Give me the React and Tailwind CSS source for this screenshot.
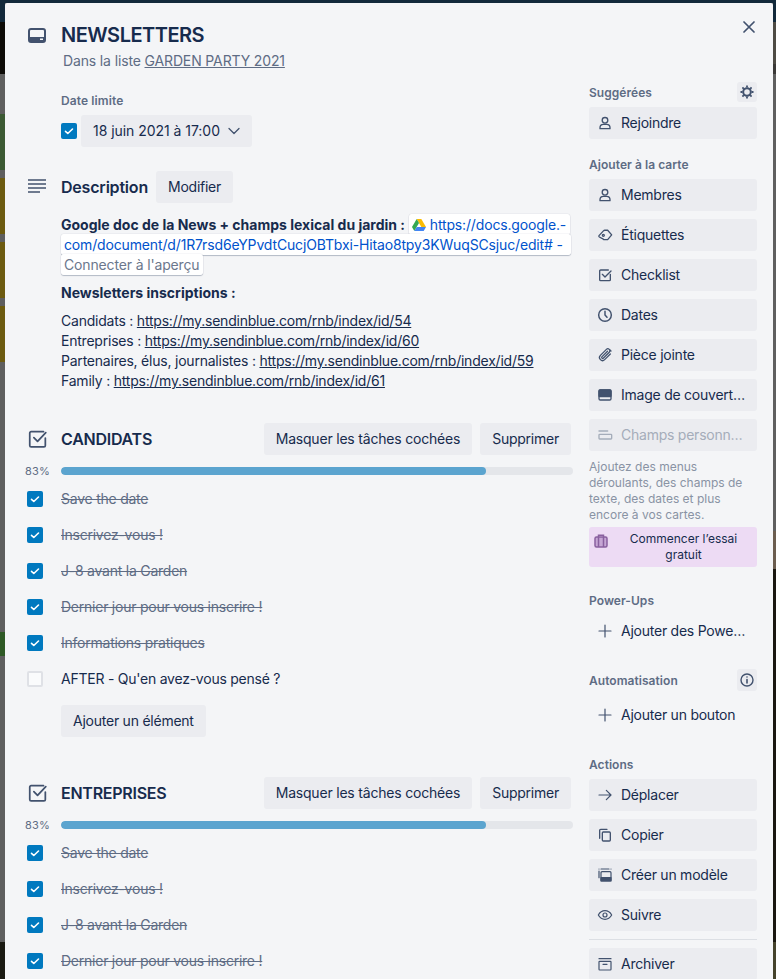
import React from 'react';

const ink = '#42526e';

function Svg({ size = 16, className = '', children, fill = 'none', stroke = ink, sw = 2 }) {
  return (
    <svg width={size} height={size} viewBox="0 0 24 24" fill={fill} stroke={stroke} strokeWidth={sw} strokeLinecap="round" strokeLinejoin="round" className={className}>
      {children}
    </svg>
  );
}

const icons = {
  user: (
    <Svg>
      <circle cx="12" cy="8" r="4.2" />
      <path d="M4.5 20.5v-1.5a5 5 0 0 1 5-5h5a5 5 0 0 1 5 5v1.500z" />
    </Svg>
  ),
  tag: (
    <Svg>
      <path d="M3 13 L10 5.500 a2 2 0 0 1 1.500-.6 H16 l6 7 -6 7 h-5 a2 2 0 0 1-1.500-.6 L3.500 15 a1.500 1.500 0 0 1-.5-2z" />
      <circle cx="9.500" cy="12.500" r="1.500" />
    </Svg>
  ),
  check: (
    <Svg>
      <path d="M20 11v8a1.500 1.500 0 0 1-1.500 1.500h-13A1.500 1.500 0 0 1 4 19V6a1.500 1.500 0 0 1 1.500-1.500H17" />
      <path d="M8 11l4 4 9-9" />
    </Svg>
  ),
  clock: (
    <Svg sw={2.2}>
      <circle cx="12" cy="12" r="9.500" />
      <path d="M12 6.500V12l3 3.500" />
    </Svg>
  ),
  clip: (
    <Svg sw={1.900}>
      <path d="M20 10.500l-8.500 8.500a4.500 4.500 0 0 1-6.400-6.400l9-9a3 3 0 0 1 4.300 4.300l-9 9a1.500 1.500 0 0 1-2.100-2.100l8.500-8.500" />
      <path d="M21 6l-2-2" />
    </Svg>
  ),
  cover: (
    <Svg fill="none">
      <rect x="3" y="4.500" width="18" height="15" rx="2" />
      <rect x="3" y="4.500" width="18" height="10" rx="1.500" fill={ink} />
    </Svg>
  ),
  fields: (
    <Svg stroke="#a5adba">
      <path d="M3 6h13" />
      <rect x="3" y="11" width="19" height="7" rx="1" />
    </Svg>
  ),
  plus: (
    <Svg size={16} sw={1.800}>
      <path d="M12 3v18M3 12h18" />
    </Svg>
  ),
  arrow: (
    <Svg sw={1.800}>
      <path d="M3 12h18M14 5l7 7-7 7" />
    </Svg>
  ),
  copy: (
    <Svg>
      <path d="M4 17V5a1.500 1.500 0 0 1 1.500-1.500H15" fill="none" />
      <rect x="8" y="7.500" width="12" height="13.500" rx="1.500" />
    </Svg>
  ),
  template: (
    <Svg sw={1.800}>
      <path d="M3 16V6M6 3h12M3 3v.01M21 3v.01" />
      <rect x="6" y="7" width="15" height="14" rx="1.500" />
      <rect x="6" y="16" width="15" height="5" fill={ink} />
    </Svg>
  ),
  eye: (
    <Svg sw={1.800}>
      <path d="M2 12c2.500-4.500 6-6.500 10-6.500s7.500 2 10 6.500c-2.500 4.500-6 6.500-10 6.500S4.500 16.500 2 12z" />
      <circle cx="12" cy="12" r="3" />
    </Svg>
  ),
  archive: (
    <Svg sw={1.800}>
      <path d="M3 4h18" />
      <rect x="3" y="8" width="18" height="13" rx="1" />
      <path d="M9 12.500h6" />
    </Svg>
  ),
};

function Tick() {
  return (
    <svg width="16" height="16" viewBox="0 0 16 16" fill="none" stroke="#fff" strokeWidth="1.600" strokeLinecap="round" strokeLinejoin="round">
      <path d="M4.500 8.300l2.300 2.200 4.700-4.500" />
    </svg>
  );
}

function CheckBox({ done = true }) {
  if (!done) {
    return <div className="h-4 w-4 rounded-[2px] border-2 border-[#dfe1e6] bg-[#fafbfc]"></div>;
  }
  return (
    <div className="h-4 w-4 rounded-[2px] bg-[#0079bf]">
      <Tick />
    </div>
  );
}

function Btn({ children, className = '' }) {
  return (
    <div className={`flex h-8 items-center rounded-[3px] bg-[#ebecf0] px-3 text-sm text-[#172b4d] ${className}`}>
      {children}
    </div>
  );
}

function SideBtn({ icon, children, plain, disabled }) {
  return (
    <div className={`flex h-8 items-center gap-2 rounded-[3px] pl-2 text-sm ${plain ? '' : 'bg-[#ebecf0]'} ${disabled ? 'text-[#a5adba]' : 'text-[#172b4d]'}`}>
      <span className="flex w-4 shrink-0 items-center justify-center">{icons[icon]}</span>
      <span className="whitespace-nowrap">{children}</span>
    </div>
  );
}

function SideLabel({ children, right }) {
  return (
    <div className="flex min-h-[20px] items-center justify-between text-xs font-semibold tracking-[0.05px] text-[#5e6c84]">
      <span className="pt-[2px]">{children}</span>
      {right}
    </div>
  );
}

function SideStack({ children, className = 'mt-[5px]' }) {
  return <div className={`flex flex-col gap-2 ${className}`}>{children}</div>;
}

function ChecklistBlock({ title, items, addButton }) {
  return (
    <div>
      <div className="flex h-8 items-center">
        <div className="flex w-[56px] shrink-0 justify-center pl-[9px]">
          <Svg size={22} sw={1.900}>
            <path d="M20 11v8a1.500 1.500 0 0 1-1.500 1.500h-14A1.500 1.500 0 0 1 3 19V5.500A1.500 1.500 0 0 1 4.500 4H18" />
            <path d="M7.500 10.500l4 4L20.500 5" />
          </Svg>
        </div>
        <h3 className="flex-1 text-base font-semibold tracking-[-0.25px] text-[#172b4d]">{title}</h3>
        <Btn className="tracking-[-0.2px]">Masquer les tâches cochées</Btn>
        <Btn className="ml-2 mr-[2px]">Supprimer</Btn>
      </div>
      <div className="mt-2 flex h-4 items-center">
        <div className="w-[56px] shrink-0 pl-[20px] text-[11px] leading-none tracking-[0.2px] text-[#5e6c84]">83%</div>
        <div className="h-2 flex-1 overflow-hidden rounded-[4px] bg-[#e4e6ea]">
          <div className="h-2 w-[83%] rounded-[4px] bg-[#5ba4cf]"></div>
        </div>
      </div>
      <div className="mt-[2px]">
        {items.map((item) => (
          <div key={item.text} className="flex h-9 items-center">
            <div className="flex w-[56px] shrink-0 pl-[22px]">
              <CheckBox done={item.done} />
            </div>
            <span className={`text-sm ${item.done ? 'text-[#5e6c84] line-through' : 'text-[#172b4d]'}`}>{item.text}</span>
          </div>
        ))}
      </div>
      {addButton && (
        <div className="ml-[56px] mt-2 flex">
          <Btn>Ajouter un élément</Btn>
        </div>
      )}
    </div>
  );
}

function Strip({ blocks, className = '' }) {
  return (
    <div className={`flex h-[979px] shrink-0 flex-col ${className}`}>
      {blocks.map(([h, color], i) => (
        <div key={i} style={{ height: h, background: color }}></div>
      ))}
    </div>
  );
}

const leftBlocks = [
  [22, '#12293b'], [52, '#0d0b07'], [40, '#5f5f5f'], [56, '#3c5a34'], [8, '#5f5f5f'], [56, '#6d5b10'], [8, '#5f5f5f'],
  [56, '#6d5b10'], [8, '#5f5f5f'], [56, '#6d5b10'], [270, '#5f5f5f'], [24, '#2f5a26'], [286, '#5f5f5f'], [37, '#1a1a12'],
];

const rightBlocks = [
  [22, '#12293b'], [42, '#4e4b44'], [10, '#3b3937'], [457, '#5f5f5f'], [38, '#6b5d4f'], [373, '#1a1710'], [37, '#45432c'],
];

const candidats = [
  { text: 'Save the date', done: true },
  { text: 'Inscrivez-vous !', done: true },
  { text: 'J-8 avant la Garden', done: true },
  { text: 'Dernier jour pour vous inscrire !', done: true },
  { text: 'Informations pratiques', done: true },
  { text: "AFTER - Qu'en avez-vous pensé ?", done: false },
];

const entreprises = candidats.slice(0, 4);

export default function App() {
  return (
    <div className="flex h-[979px] w-[776px] overflow-hidden bg-[#5f5f5f] font-['Inter',sans-serif] tracking-[-0.24px]">
      <Strip blocks={leftBlocks} className="w-[5px]" />

      <div className="flex w-[768px] shrink-0 flex-col">
        <div className="h-[3px] shrink-0 bg-[#12293b]"></div>
        <div className="relative flex flex-1 overflow-hidden rounded-t-[2px] bg-[#f4f5f7]">
          {/* close button */}
          <svg className="absolute right-[18px] top-[18px]" width="12" height="12" viewBox="0 0 12 12" fill="none" stroke={ink} strokeWidth="1.700" strokeLinecap="round">
            <path d="M1 1l10 10M11 1L1 11" />
          </svg>

          {/* main column */}
          <div className="w-[568px] shrink-0 pt-5">
            <div className="flex h-6 items-center">
              <div className="flex w-[56px] shrink-0 justify-center pl-[8px]">
                <svg width="18" height="15" viewBox="0 0 18 15">
                  <rect x="1" y="1" width="16" height="13" rx="2" fill="none" stroke={ink} strokeWidth="2" />
                  <rect x="1" y="9" width="16" height="5" rx="1" fill={ink} />
                  <rect x="12" y="10.500" width="3" height="1.500" fill="#f4f5f7" />
                </svg>
              </div>
              <h2 className="text-[20px] font-semibold leading-6 tracking-[-0.5px] text-[#172b4d]">NEWSLETTERS</h2>
            </div>
            <p className="ml-[58px] mt-1 text-sm leading-5 tracking-[-0.14px] text-[#5e6c84]">
              Dans la liste <span className="underline">GARDEN PARTY 2021</span>
            </p>

            <div className="ml-[56px] mt-[22px] text-xs font-semibold leading-4 tracking-[0.1px] text-[#5e6c84]">Date limite</div>
            <div className="ml-[56px] mt-[6px] flex items-center gap-1">
              <CheckBox />
              <Btn className="gap-2 tracking-[-0.04px]">
                18 juin 2021 à 17:00
                <svg width="12" height="12" viewBox="0 0 12 12" fill="none" stroke={ink} strokeWidth="1.300" strokeLinecap="round" strokeLinejoin="round">
                  <path d="M1 3.500l5 5 5-5" />
                </svg>
              </Btn>
            </div>

            <div className="mt-6 flex h-8 items-center">
              <div className="flex w-[56px] shrink-0 justify-center pl-[8px]">
                <svg width="18" height="16" viewBox="0 0 18 16" stroke={ink} strokeWidth="1.500">
                  <path d="M0 1h18M0 5h18M0 9h18M0 13h12" />
                </svg>
              </div>
              <h3 className="text-base font-semibold tracking-[-0.2px] text-[#172b4d]">Description</h3>
              <Btn className="ml-2">Modifier</Btn>
            </div>

            <div className="ml-[56px] mt-3 text-sm leading-5 text-[#172b4d]">
              <p>
                <strong className="font-bold tracking-normal">Google doc de la News + champs lexical du jardin :</strong>{' '}
                <span className="rounded-[3px] bg-white py-[2px] pl-[3px] pr-[4px] tracking-[-0.15px] text-[#0052cc] shadow-[0_1px_1px_rgba(9,30,66,0.25),0_0_1px_rgba(9,30,66,0.31)] [box-decoration-break:clone]">
                  <svg className="mr-[4px] inline align-[-1px]" width="14" height="12" viewBox="0 0 14 12">
                    <path d="M4.700 0h4.600l4.700 8H9.300z" fill="#fbbc04" />
                    <path d="M4.700 0L0 8l2.300 4 4.700-8z" fill="#34a853" />
                    <path d="M4.700 8H14l-2.300 4H2.300z" fill="#4285f4" />
                  </svg>
                  https://docs.google.-
                  <br />
                  com/document/d/1R7rsd6eYPvdtCucjOBTbxi-Hitao8tpy3KWuqSCsjuc/edit# -<span className="pr-[4px]"></span>
                  <br />
                  <span className="text-[#6b778c]">Connecter à l'aperçu</span>
                </span>
              </p>
              <p className="mt-2 font-bold tracking-normal">Newsletters inscriptions :</p>
              <p className="mt-2 tracking-[-0.22px]">
                Candidats : <span className="underline">https://my.sendinblue.com/rnb/index/id/54</span>
                <br />
                Entreprises : <span className="underline">https://my.sendinblue.com/rnb/index/id/60</span>
                <br />
                Partenaires, élus, journalistes : <span className="underline">https://my.sendinblue.com/rnb/index/id/59</span>
                <br />
                Family : <span className="underline">https://my.sendinblue.com/rnb/index/id/61</span>
              </p>
            </div>

            <div className="mt-8">
              <ChecklistBlock title="CANDIDATS" items={candidats} addButton />
            </div>
            <div className="mt-10">
              <ChecklistBlock title="ENTREPRISES" items={entreprises} />
            </div>
          </div>

          {/* sidebar */}
          <div className="ml-4 w-[168px] shrink-0 pt-[79px]">
            <SideLabel
              right={
                <span className="flex h-5 w-5 items-center justify-center rounded-[3px] bg-[#ebecf0]">
                  <svg width="14" height="14" viewBox="0 0 14 14" fill="none" stroke={ink} strokeWidth="2">
                    <circle cx="7" cy="7" r="3.800" />
                    <path d="M7 .5v2M7 11.500v2M.5 7h2M11.500 7h2M2.400 2.400l1.400 1.400M10.200 10.200l1.400 1.400M2.400 11.600l1.400-1.400M10.200 3.800l1.400-1.400" strokeWidth="1.800" />
                  </svg>
                </span>
              }
            >
              Suggérées
            </SideLabel>
            <SideStack>
              <SideBtn icon="user">Rejoindre</SideBtn>
            </SideStack>

            <div className="mt-[15px]">
              <SideLabel>Ajouter à la carte</SideLabel>
            </div>
            <SideStack>
              <SideBtn icon="user">Membres</SideBtn>
              <SideBtn icon="tag">Étiquettes</SideBtn>
              <SideBtn icon="check">Checklist</SideBtn>
              <SideBtn icon="clock">Dates</SideBtn>
              <SideBtn icon="clip">Pièce jointe</SideBtn>
              <SideBtn icon="cover">Image de couvert…</SideBtn>
              <SideBtn icon="fields" disabled>Champs personn…</SideBtn>
            </SideStack>
            <p className="mt-2 text-xs leading-4 tracking-normal text-[#8993a4]">
              Ajoutez des menus déroulants, des champs de texte, des dates et plus encore à vos cartes.
            </p>
            <div className="mt-1 flex h-10 items-center rounded-[3px] bg-[#eddbf4] pl-[5px] text-xs leading-4 tracking-normal text-[#172b4d]">
              <svg width="14" height="14" viewBox="0 0 14 14" fill="none" stroke="#89609e" strokeWidth="1.500" className="mb-[13px] shrink-0">
                <rect x="1" y="3" width="12" height="10" rx="1.500" fill="#c6a6d4" />
                <path d="M4.500 3V1.200h5V3M4.500 3v10M9.500 3v10" />
              </svg>
              <span className="flex-1 pl-[2px] text-center">Commencer l’essai<br />gratuit</span>
            </div>

            <div className="mt-[23px]">
              <SideLabel>Power-Ups</SideLabel>
            </div>
            <SideStack>
              <SideBtn icon="plus" plain>Ajouter des Powe…</SideBtn>
            </SideStack>

            <div className="mt-[22px]">
              <SideLabel
                right={
                  <span className="flex h-[22px] w-5 items-center justify-center rounded-[3px] bg-[#ebecf0]">
                    <svg width="14" height="14" viewBox="0 0 14 14" fill="none" stroke={ink} strokeWidth="1.400" strokeLinecap="round">
                      <circle cx="7" cy="7" r="6" />
                      <path d="M7 6.500v3.500M7 4v.01" strokeWidth="1.600" />
                    </svg>
                  </span>
                }
              >
                Automatisation
              </SideLabel>
            </div>
            <SideStack className="mt-2">
              <SideBtn icon="plus" plain>Ajouter un bouton</SideBtn>
            </SideStack>

            <div className="mt-[23px]">
              <SideLabel>Actions</SideLabel>
            </div>
            <SideStack>
              <SideBtn icon="arrow">Déplacer</SideBtn>
              <SideBtn icon="copy">Copier</SideBtn>
              <SideBtn icon="template">Créer un modèle</SideBtn>
              <SideBtn icon="eye">Suivre</SideBtn>
            </SideStack>
            <div className="mb-2 mt-2 h-px bg-[#dcdfe4]"></div>
            <SideBtn icon="archive">Archiver</SideBtn>
          </div>
        </div>
      </div>

      <Strip blocks={rightBlocks} className="w-[3px]" />
    </div>
  );
}
